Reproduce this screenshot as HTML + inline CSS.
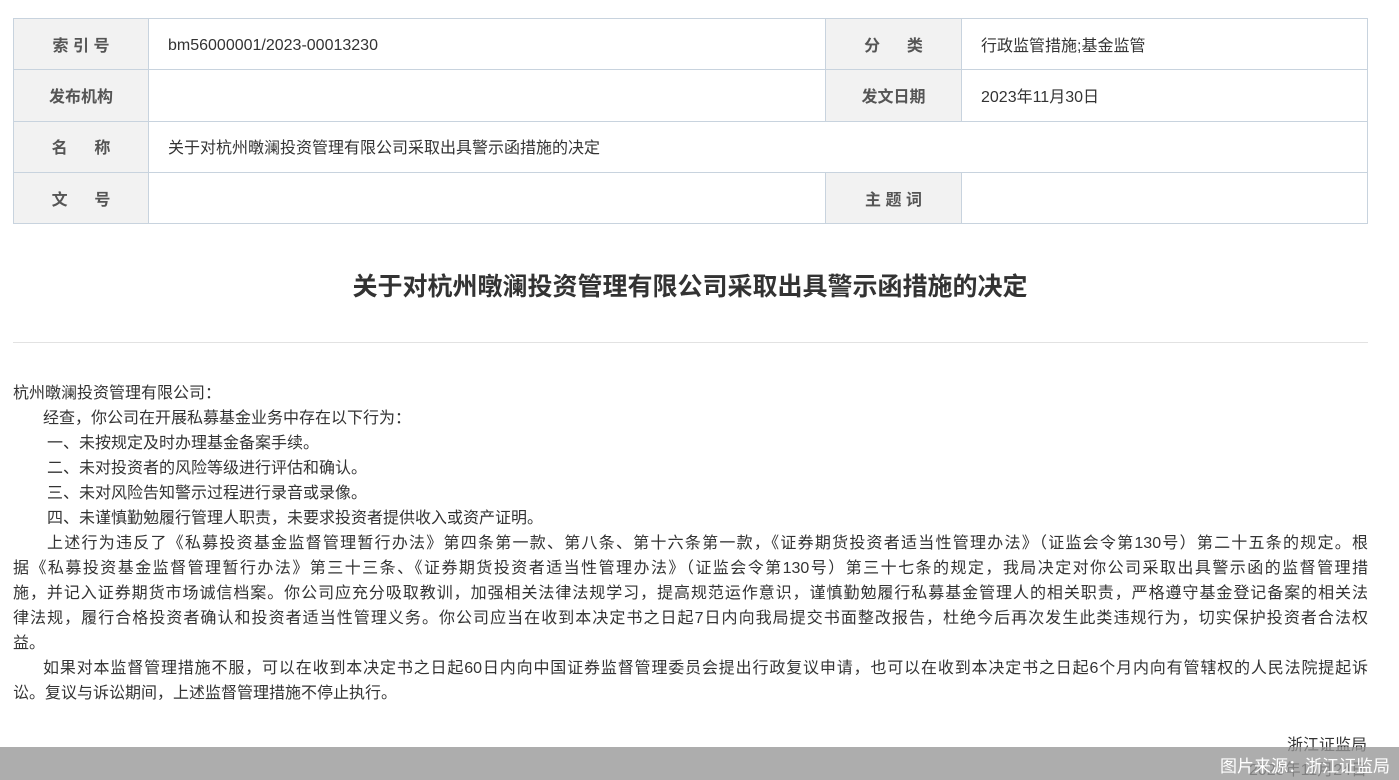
<!DOCTYPE html>
<html><head><meta charset="utf-8"><style>
*{margin:0;padding:0;box-sizing:border-box}
body{width:1399px;height:780px;overflow:hidden;background:#fff;font-family:"Liberation Sans","Noto Sans CJK SC",sans-serif;color:#333;position:relative}
table{position:absolute;left:13px;top:18px;width:1355px;border-collapse:collapse}
td{border:1px solid #c8d3de;height:51.3px;font-size:16px;color:#333;vertical-align:middle;line-height:20px;padding-top:5px}
td.l{background:#f2f2f2;text-align:center;font-weight:bold;color:#555;width:135px}
td.v{padding-left:19px}
h1{position:absolute;left:0;width:1380px;top:267px;text-align:center;font-size:25px;font-weight:bold;color:#333}
.hr{position:absolute;left:13px;width:1355px;top:342px;border-top:1px solid #e2e2e2}
.body{position:absolute;left:13px;top:381px;width:1355px;font-size:16px;line-height:25px;color:#333}
.j{text-align:justify;text-align-last:justify}
.sig{position:absolute;right:32px;font-size:16px;color:#333}
.bar{position:absolute;left:0;top:747px;width:1399px;height:33px;background:rgba(150,150,150,.78)}
.bar span{position:absolute;right:9px;top:5px;color:#fff;font-size:17px}
</style></head><body>
<table>
<tr><td class="l">索&nbsp;引&nbsp;号</td><td class="v" style="width:677px;padding-top:4px">bm56000001/2023-00013230</td><td class="l" style="width:136px">分&nbsp;&nbsp;&nbsp;&nbsp;&nbsp;&nbsp;类</td><td class="v">行政监管措施;基金监管</td></tr>
<tr><td class="l">发布机构</td><td class="v"></td><td class="l">发文日期</td><td class="v">2023年11月30日</td></tr>
<tr><td class="l">名&nbsp;&nbsp;&nbsp;&nbsp;&nbsp;&nbsp;称</td><td class="v" colspan="3">关于对杭州暾澜投资管理有限公司采取出具警示函措施的决定</td></tr>
<tr><td class="l">文&nbsp;&nbsp;&nbsp;&nbsp;&nbsp;&nbsp;号</td><td class="v"></td><td class="l">主&nbsp;题&nbsp;词</td><td class="v"></td></tr>
</table>
<h1>关于对杭州暾澜投资管理有限公司采取出具警示函措施的决定</h1>
<div class="hr"></div>
<div class="body">
<div>杭州暾澜投资管理有限公司：</div>
<div style="padding-left:30px">经查，你公司在开展私募基金业务中存在以下行为：</div>
<div style="padding-left:34px">一、未按规定及时办理基金备案手续。</div>
<div style="padding-left:34px">二、未对投资者的风险等级进行评估和确认。</div>
<div style="padding-left:34px">三、未对风险告知警示过程进行录音或录像。</div>
<div style="padding-left:34px">四、未谨慎勤勉履行管理人职责，未要求投资者提供收入或资产证明。</div>
<div class="j" style="padding-left:34px">上述行为违反了《私募投资基金监督管理暂行办法》第四条第一款、第八条、第十六条第一款，《证券期货投资者适当性管理办法》（证监会令第130号）第二十五条的规定。根</div>
<div class="j">据《私募投资基金监督管理暂行办法》第三十三条、《证券期货投资者适当性管理办法》（证监会令第130号）第三十七条的规定，我局决定对你公司采取出具警示函的监督管理措</div>
<div class="j">施，并记入证券期货市场诚信档案。你公司应充分吸取教训，加强相关法律法规学习，提高规范运作意识，谨慎勤勉履行私募基金管理人的相关职责，严格遵守基金登记备案的相关法</div>
<div class="j">律法规，履行合格投资者确认和投资者适当性管理义务。你公司应当在收到本决定书之日起7日内向我局提交书面整改报告，杜绝今后再次发生此类违规行为，切实保护投资者合法权</div>
<div>益。</div>
<div class="j" style="padding-left:30px">如果对本监督管理措施不服，可以在收到本决定书之日起60日内向中国证券监督管理委员会提出行政复议申请，也可以在收到本决定书之日起6个月内向有管辖权的人民法院提起诉</div>
<div>讼。复议与诉讼期间，上述监督管理措施不停止执行。</div>
</div>
<div class="sig" style="top:731px">浙江证监局</div>
<div class="sig" style="top:756px">2023年11月24日</div>
<div class="bar"><span>图片来源：浙江证监局</span></div>
</body></html>
